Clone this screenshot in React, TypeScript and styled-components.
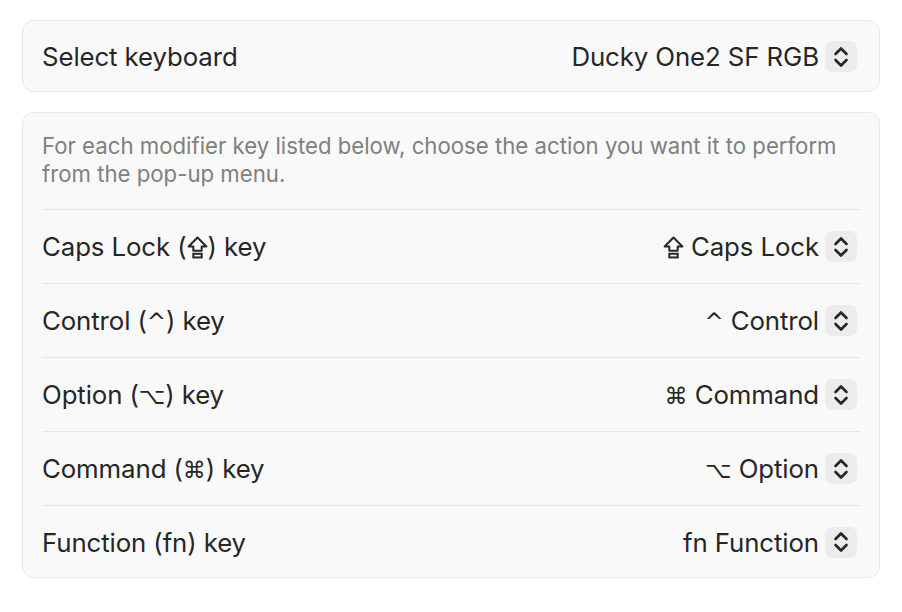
import React from "react";
import styled, { createGlobalStyle } from "styled-components";

const Global = createGlobalStyle`
  html, body { margin: 0; padding: 0; background: #ffffff; }
  body { font-family: Inter, "Noto Sans", "DejaVu Sans", sans-serif; color: #242424; -webkit-font-smoothing: antialiased; }
`;

const Page = styled.div`
  display: flex;
  flex-direction: column;
  gap: 20px;
  padding: 20px 22px 0 22px;
  width: 902px;
  box-sizing: border-box;
`;

const Card = styled.section`
  background: #f9f9f9;
  border: 1px solid #e9e9e9;
  border-radius: 12px;
  padding: 0 19px;
  display: flex;
  flex-direction: column;
`;

const Row = styled.div<{ $divider?: boolean; $last?: boolean }>`
  display: flex;
  align-items: center;
  justify-content: space-between;
  height: ${(p) => (p.$last ? "70px" : "73px")};
  padding-top: ${(p) => (p.$last ? "1px" : "0")};
  box-sizing: content-box;
  border-top: ${(p) => (p.$divider ? "1px solid #e5e5e5" : "none")};
`;

const TopRow = styled.div`
  display: flex;
  align-items: center;
  justify-content: space-between;
  height: 70px;
  padding-top: 1px;
  box-sizing: border-box;
`;

const Label = styled.span`
  font-size: 25.8px;
  letter-spacing: -0.1px;
  color: #262626;
  white-space: nowrap;
`;

const Sym = styled.span`
  font-family: "DejaVu Sans", sans-serif;
  font-size: 23px;
`;

const Description = styled.p`
  margin: 0;
  padding: 19px 0 21px 0;
  font-size: 22.2px;
  line-height: 28px;
  color: #808080;
  border-bottom: 1px solid #e5e5e5;
`;

const Popup = styled.div`
  display: flex;
  align-items: center;
  gap: 6px;
  margin-right: 3px;
`;

const Value = styled.span`
  font-size: 25.8px;
  letter-spacing: -0.1px;
  color: #262626;
  white-space: nowrap;
`;

const Stepper = styled.span`
  width: 32px;
  height: 31px;
  border-radius: 7px;
  background: #ececec;
  display: flex;
  align-items: center;
  justify-content: center;
`;

const Chevrons = () => (
  <svg width="16" height="24" viewBox="0 0 16 24" fill="none">
    <path d="M2.5 9 L8 3.5 L13.5 9" stroke="#262626" strokeWidth="2.6" strokeLinecap="round" strokeLinejoin="round" />
    <path d="M2.5 15 L8 20.5 L13.5 15" stroke="#262626" strokeWidth="2.6" strokeLinecap="round" strokeLinejoin="round" />
  </svg>
);

const CapsIcon = styled.svg`
  width: 21px;
  height: 23px;
  vertical-align: -3px;
`;

const Caps = () => (
  <CapsIcon viewBox="0 0 20 22" fill="none">
    <path d="M10 1.5 L18.5 10 L14 10 L14 14 L6 14 L6 10 L1.5 10 Z" stroke="#262626" strokeWidth="1.9" strokeLinejoin="round" />
    <rect x="6" y="17" width="8" height="3.5" stroke="#262626" strokeWidth="1.9" />
  </CapsIcon>
);

type Item = { label: React.ReactNode; value: React.ReactNode };

const items: Item[] = [
  {
    label: <>Caps Lock (<Caps />) key</>,
    value: <><Caps /> Caps Lock</>,
  },
  {
    label: <>Control (<Sym>^</Sym>) key</>,
    value: <><Sym>^</Sym> Control</>,
  },
  {
    label: <>Option (<Sym>⌥</Sym>) key</>,
    value: <><Sym>⌘</Sym> Command</>,
  },
  {
    label: <>Command (<Sym>⌘</Sym>) key</>,
    value: <><Sym>⌥</Sym> Option</>,
  },
  {
    label: <>Function (fn) key</>,
    value: <>fn Function</>,
  },
];

export default function App() {
  return (
    <>
      <Global />
      <Page>
        <Card>
          <TopRow>
            <Label>Select keyboard</Label>
            <Popup>
              <Value>Ducky One2 SF RGB</Value>
              <Stepper><Chevrons /></Stepper>
            </Popup>
          </TopRow>
        </Card>
        <Card>
          <Description>
            For each modifier key listed below, choose the action you want it to perform from the pop-up menu.
          </Description>
          {items.map((it, i) => (
            <Row key={i} $divider={i > 0} $last={i === items.length - 1}>
              <Label>{it.label}</Label>
              <Popup>
                <Value>{it.value}</Value>
                <Stepper><Chevrons /></Stepper>
              </Popup>
            </Row>
          ))}
        </Card>
      </Page>
    </>
  );
}
